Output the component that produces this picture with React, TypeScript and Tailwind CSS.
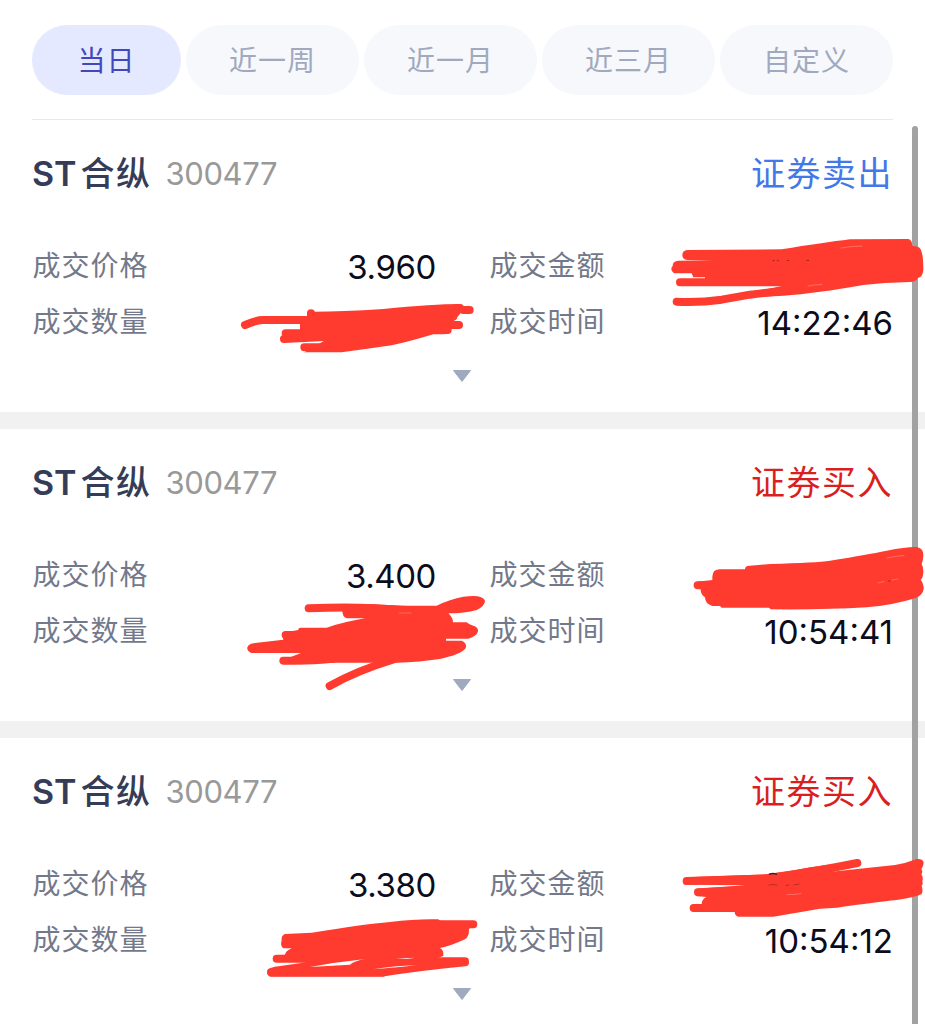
const tabs = ["当日", "近一周", "近一月", "近三月", "自定义"];

const trades = [
  { side: "证券卖出", sell: true, price: "3.960", time: "14:22:46" },
  { side: "证券买入", sell: false, price: "3.400", time: "10:54:41" },
  { side: "证券买入", sell: false, price: "3.380", time: "10:54:12" },
];

// Pen marks covering private values: a filled body plus loose round strokes.
const marks = [
  {
    at: "translate(220 230) scale(0.33333)",
    body: "M262 245Q350 246 490 237Q640 222 720 222L735 232L712 262Q712 270 695 275L690 304Q688 313 670 313H640Q560 337 515 346Q440 357 365 367H253L310 334L330 328L190 335V300H240V282L262 260Z",
    lines: "M75 285Q110 270 128 270H270M273 250V260M192 327L330 320M197 310H300M253 352H370M710 234H720M730 240H749M670 285H717M650 300H683",
  },
  {
    at: "translate(650 220) scale(0.33333)",
    body: "M112 90L395 88Q520 68 600 58L775 57Q787 60 787 78Q812 76 815 97Q820 110 820 150Q818 172 803 174Q800 185 780 186Q700 188 640 195Q500 220 400 227L340 230L330 212L395 198H165V172H130L125 160H72Q58 148 68 138Q68 123 85 122L190 121L112 120Q97 118 97 105Q97 92 112 90Z",
    lines: "M90 187H400M80 245Q150 248 215 239L300 224Q400 211 500 203",
  },
  {
    at: "translate(650 530) scale(0.33333)",
    body: "M187 140Q187 118 210 118H285Q285 106 300 107L360 102Q500 98 540 92Q650 74 710 62Q770 50 800 51Q820 54 820 75Q820 90 815 102Q820 110 820 125Q820 142 812 149Q821 160 821 178Q818 194 800 203Q730 225 650 232Q520 240 362 238L357 233H215L210 228H187Q165 222 165 202Q152 194 152 178L140 172V155L187 150Z",
    lines: "M143 166H200",
  },
  {
    at: "translate(220 550) scale(0.33333)",
    body: "M320 233Q370 216 435 205H380Q366 200 367 180L450 162Q540 169 650 167Q690 147 730 140Q788 132 795 152Q795 168 770 180Q735 190 685 190Q699 203 699 217L740 217Q748 225 760 227Q775 231 774 244Q771 259 745 266H678V272H725Q742 279 737 295Q722 314 660 327Q600 336 530 338L340 338L240 343L190 330L243 309H95Q80 304 82 292Q87 280 105 279L190 269L187 248L235 240Q234 233 242 233Z",
    lines: "M266 175Q420 168 540 180H650M197 255H250M190 332Q270 334 340 326M329 408Q410 362 525 327",
  },
  {
    at: "translate(220 860) scale(0.33333)",
    body: "M195 222L275 218Q430 193 510 186Q590 176 655 178L660 182L758 188L755 200L747 207Q748 230 735 238Q690 259 660 264Q672 270 670 288L650 295L590 325Q520 342 490 350H150Q140 343 143 330Q150 322 175 319L260 307L170 304V287L195 284Q196 274 215 265H190Q180 258 185 240Q183 226 195 222Z",
    lines: "M170 296H300M153 337H490Q620 318 735 307M400 308Q560 302 735 304M658 193H760",
  },
  {
    at: "translate(650 840) scale(0.33333)",
    body: "M110 112L350 103Q440 91 480 82L620 64L625 78L545 95L735 75Q770 69 800 57Q819 55 821 68Q820 80 814 88Q820 95 814 103Q821 112 817 124Q820 131 815 138Q820 151 815 162Q800 171 740 180Q680 186 560 203L510 206Q440 218 370 230H265Q254 227 254 215H130V192H155Q155 178 169 171L140 168V146L285 136L110 134Z",
    lines: "M110 123L350 115Q500 94 622 69M144 157L350 147M131 204H270",
  },
];

function PenMarks() {
  return (
    <svg className="pointer-events-none absolute left-0 top-0" width="925" height="1024" viewBox="0 0 925 1024" aria-hidden="true">
      {marks.map((m) => (
        <g key={m.at} transform={m.at} strokeLinecap="round" strokeLinejoin="round">
          <path d={m.body} fill="#ff3b30" />
          <path d={m.lines} fill="none" stroke="#ff3b30" strokeWidth="24" />
        </g>
      ))}
      <g transform="translate(220 860) scale(0.33333)" fill="#ffffff">
        <path d="M270 321Q350 306 437 297Q400 303 390 314Z" />
        <path d="M460 328Q520 318 590 316Q530 323 460 328Z" />
        <path d="M528 296L586 293L560 297Z" />
      </g>
      <g fill="none" strokeLinecap="round">
        <path d="M773 260.6h1M777.500 260.600h.8M787.500 260.500h1M807 260.4h1.500M888.800 581.200l1-.4" stroke="#7d201d" strokeWidth="0.9" />
        <path d="M769.500 874.200q3.500-1.500 7 0" stroke="#481c20" strokeWidth="1.400" />
        <path d="M769 885q4-1 8 0M786 885.500l3-.5M794 885l5-1" stroke="#a52a25" strokeWidth="0.8" />
        <path d="M841 248q11-2 21-2M808 286q6-1.500 14-1.500M887 558q8-2 17-2.500M878 583l6-1.500M892 580l6-1M399 613h12M787 894.500q8 .5 14-1" stroke="#ff8177" strokeWidth="0.7" />
      </g>
    </svg>
  );
}

function Label({ children }: { children: string }) {
  return <span className="pl-[0.5px] pt-[2px] text-[28px] tracking-[1px] text-[#73798a]">{children}</span>;
}

function Trade({ trade }: { trade: (typeof trades)[number] }) {
  return (
    <section className="h-[309px] shrink-0 border-b-[17px] border-[#f1f1f1] px-8">
      <div className="flex h-[107px] items-center justify-between">
        <div className="flex items-center">
          <h2 className="flex items-center text-[34px] font-semibold text-[#353c58]">
            <span>ST</span>
            <span className="ml-1 pt-px font-medium tracking-[1.500px]">合纵</span>
          </h2>
          <span className="ml-3.5 text-[31px] tracking-[-0.4px] text-[#999999]">300477</span>
        </div>
        <span className={`pt-px text-[34px] tracking-[1.500px] ${trade.sell ? "text-[#4378e8]" : "text-[#d91f1f]"}`}>{trade.side}</span>
      </div>
      <div className="flex gap-[53px] pt-[10px]">
        <div className="w-[404px]">
          <div className="flex h-14 items-center justify-between">
            <Label>成交价格</Label>
            <span className="pt-[5px] text-[33px] tracking-[-0.4px] text-[#0b0c1c]">{trade.price}</span>
          </div>
          <div className="flex h-14 items-center">
            <Label>成交数量</Label>
          </div>
        </div>
        <div className="w-[404px]">
          <div className="flex h-14 items-center">
            <Label>成交金额</Label>
          </div>
          <div className="flex h-14 items-center justify-between">
            <Label>成交时间</Label>
            <span className="pt-[5px] text-[33px] text-[#0b0c1c]">{trade.time}</span>
          </div>
        </div>
      </div>
      <div className="flex justify-center pt-[20px] pr-[1px]">
        <svg width="20" height="14" viewBox="0 0 20 14" aria-hidden="true">
          <path d="M1.500 1.500H18.500L10 12.500Z" fill="#a0aabf" stroke="#a0aabf" strokeLinejoin="round" />
        </svg>
      </div>
    </section>
  );
}

export default function App() {
  return (
    <main className="relative flex h-[1024px] w-[925px] flex-col overflow-hidden bg-white font-['Inter','Noto_Sans_CJK_SC',sans-serif] leading-none whitespace-nowrap">
      <header className="h-[120px] shrink-0 px-8 pt-[25px]">
        <nav className="flex h-[94px] gap-[5px]">
          {tabs.map((t, i) => (
            <button
              key={t}
              className={`flex h-[70px] items-center justify-center rounded-full pt-[2px] text-[28px] tracking-[1px] ${
                i === 0 ? "w-[149px] bg-[#e4e9ff] text-[#4148bd]" : "w-[173px] bg-[#f6f8fc] text-[#a1a9be]"
              }`}
            >
              {t}
            </button>
          ))}
        </nav>
        <div className="h-px w-[861px] bg-[#e8e8e8]" />
      </header>
      {trades.map((t) => (
        <Trade key={t.time} trade={t} />
      ))}
      <div className="absolute left-[912px] top-[126px] h-[910px] w-[6px] rounded-full bg-[#a2a2a2]" />
      <PenMarks />
    </main>
  );
}
